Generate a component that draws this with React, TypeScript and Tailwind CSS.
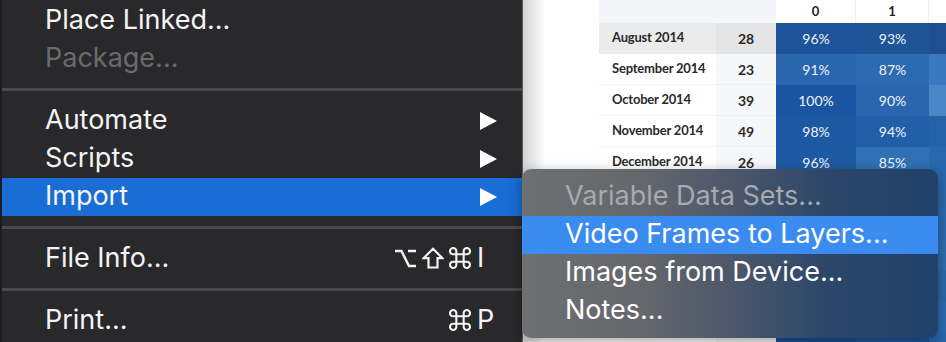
import React from "react";

const menuFont = { fontFamily: "Inter, 'Noto Sans', 'DejaVu Sans', sans-serif" };
const tableFont = { fontFamily: "Lato, 'Open Sans', sans-serif" };

function Arrow() {
  return (
    <svg width="17" height="18" viewBox="0 0 17 18" className="shrink-0">
      <polygon points="0,0 17,9 0,18" fill="#ffffff" />
    </svg>
  );
}

function OptIcon() {
  return (
    <svg width="23" height="20" viewBox="0 0 23 20" className="shrink-0">
      <path d="M1 3 H7.5 L15 18 H22 M14 3 H22" fill="none" stroke="#f4f4f4" strokeWidth="2.4" />
    </svg>
  );
}

function ShiftIcon() {
  return (
    <svg width="22" height="22" viewBox="0 0 22 22" className="shrink-0">
      <polygon
        points="11,1.8 20.5,11.2 15.5,11.2 15.5,20.5 6.5,20.5 6.5,11.2 1.5,11.2"
        fill="none"
        stroke="#f4f4f4"
        strokeWidth="2.2"
        strokeLinejoin="miter"
      />
    </svg>
  );
}

function CmdIcon() {
  return (
    <svg width="22" height="22" viewBox="2 2 18 18" className="shrink-0">
      <path
        d="M8 8 V5.5 A2.6 2.6 0 1 0 5.5 8 H16.5 A2.6 2.6 0 1 0 14 5.5 V16.5 A2.6 2.6 0 1 0 16.5 14 H5.5 A2.6 2.6 0 1 0 8 16.5 Z"
        fill="none"
        stroke="#f4f4f4"
        strokeWidth="1.7"
      />
    </svg>
  );
}

function Sep() {
  return (
    <div className="h-[24px] pt-[10px]">
      <div className="h-[3px] bg-[#4a4a4c]" />
    </div>
  );
}

type RowProps = {
  label: string;
  disabled?: boolean;
  highlight?: boolean;
  arrow?: boolean;
  mods?: string[];
  keyChar?: string;
};

function Mod({ m }: { m: string }) {
  if (m === "opt") return <OptIcon />;
  if (m === "shift") return <ShiftIcon />;
  return <CmdIcon />;
}

function Row({ label, disabled, highlight, arrow, mods, keyChar }: RowProps) {
  return (
    <div
      className={`h-[38px] flex items-center pl-[43px] pr-[25px] ${
        highlight ? "bg-[#1a6dd5]" : ""
      }`}
    >
      <span
        className={`flex-1 text-[27px] leading-none pb-[4px] whitespace-nowrap ${
          disabled ? "text-[#6b6b6d]" : "text-[#f4f4f4]"
        }`}
        style={menuFont}
      >
        {label}
      </span>
      {arrow && <Arrow />}
      {keyChar && (
        <div className="flex items-center pb-[3px]">
          <div className="flex items-center gap-[5px]">
            {mods?.map((m, i) => (
              <Mod key={i} m={m} />
            ))}
          </div>
          <span
            className="w-[20px] ml-[6px] text-[27px] leading-none text-[#f4f4f4] pb-[1px]"
            style={menuFont}
          >
            {keyChar}
          </span>
        </div>
      )}
    </div>
  );
}

const rows = [
  { name: "August 2014", n: "28", v: ["96%", "93%", "90%"], c: ["#1d5399", "#1e5498", "#1f4f8f"], hi: true },
  { name: "September 2014", n: "23", v: ["91%", "87%", "85%"], c: ["#2966ae", "#2c6bb2", "#3a78bf"] },
  { name: "October 2014", n: "39", v: ["100%", "90%", "82%"], c: ["#1b55a2", "#2966ad", "#4a86c8"] },
  { name: "November 2014", n: "49", v: ["98%", "94%", "92%"], c: ["#1d58a2", "#2160a8", "#2563a8"] },
  { name: "December 2014", n: "26", v: ["96%", "85%", "88%"], c: ["#1e5aa3", "#3070b5", "#2968ad"] },
  { name: "January 2015", n: "31", v: ["97%", "90%", "89%"], c: ["#1d58a1", "#2966ad", "#2a69ae"] },
  { name: "February 2015", n: "35", v: ["94%", "91%", "87%"], c: ["#2160a8", "#2864ab", "#2c6bb2"] },
  { name: "March 2015", n: "42", v: ["95%", "89%", "86%"], c: ["#1f5ca5", "#2a68ae", "#2e6db3"] },
  { name: "April 2015", n: "38", v: ["97%", "92%", "88%"], c: ["#1d58a1", "#2562a9", "#2968ad"] },
  { name: "May 2015", n: "44", v: ["96%", "90%", "87%"], c: ["#1e5aa3", "#2966ad", "#2c6bb2"] },
  { name: "June 2015", n: "29", v: ["100%", "95%", "90%"], c: ["#1a4f95", "#1d569e", "#2966ad"] },
];

function Table() {
  return (
    <div className="shrink-0 text-[13px]" style={tableFont}>
      <div className="flex h-[23px]">
        <div className="w-[177px] shrink-0 bg-[#f3f5f8]" />
        <div className="w-[80px] shrink-0 bg-white border-r border-[#eceef1] flex items-center justify-center font-bold text-[#222]">0</div>
        <div className="w-[73px] shrink-0 bg-white border-r border-[#eceef1] flex items-center justify-center font-bold text-[#222]">1</div>
        <div className="w-[73px] shrink-0 bg-white flex items-center justify-center font-bold text-[#222]">2</div>
      </div>
      {rows.map((r, i) => (
        <div key={i} className="flex h-[31px]">
          <div
            className={`w-[117px] shrink-0 pl-[13px] flex items-center font-bold text-[#2a2a2a] whitespace-nowrap border-b tracking-[-0.2px] ${
              r.hi ? "bg-[#ebebeb] border-[#ebebeb]" : "bg-white border-[#f1f2f4]"
            }`}
          >
            {r.name}
          </div>
          <div
            className={`w-[60px] shrink-0 flex items-center justify-center font-bold text-[14px] text-[#2a2a2a] border-b ${
              r.hi ? "bg-[#e4e4e4] border-[#e4e4e4]" : "bg-[#f6f7f9] border-[#eef0f2]"
            }`}
          >
            {r.n}
          </div>
          {r.v.map((v, j) => (
            <div
              key={j}
              className={`shrink-0 flex items-center justify-center text-[14px] text-[#eef3fa] ${
                j === 0 ? "w-[80px]" : "w-[73px]"
              }`}
              style={{ backgroundColor: r.c[j] }}
            >
              {v}
            </div>
          ))}
        </div>
      ))}
    </div>
  );
}

export default function App() {
  return (
    <div className="relative w-[946px] h-[342px] overflow-hidden bg-white flex">
      {/* Main menu */}
      <div className="w-[523px] h-full shrink-0 bg-[#29292b] border-l-2 border-[#1c1c1e] border-r border-r-[#5e5e60] pt-[2px] flex flex-col">
        <Row label="Place Linked..." />
        <Row label="Package..." disabled />
        <Sep />
        <Row label="Automate" arrow />
        <Row label="Scripts" arrow />
        <Row label="Import" arrow highlight />
        <Sep />
        <Row label="File Info..." mods={["opt", "shift", "cmd"]} keyChar="I" />
        <Sep />
        <Row label="Print..." mods={["cmd"]} keyChar="P" />
      </div>

      {/* Page with table */}
      <div className="relative flex-1 h-full overflow-hidden bg-white pl-[76px] flex">
        <div className="absolute left-0 top-0 h-full w-[22px] bg-gradient-to-r from-[#d2d2d2] to-white" />
        <Table />
      </div>

      {/* Submenu */}
      <div className="absolute left-[522px] top-[169px] w-[416px] h-[169px] rounded-[9px] pt-[9px] bg-[linear-gradient(to_right,#6f7072_0%,#64666b_30%,#4b566a_52%,#2c4769_72%,#21416b_100%)] shadow-[0_4px_14px_rgba(0,0,0,0.35)] overflow-hidden">
        {[
          { t: "Variable Data Sets...", d: true },
          { t: "Video Frames to Layers...", h: true },
          { t: "Images from Device..." },
          { t: "Notes..." },
        ].map((it, i) => (
          <div
            key={i}
            className={`h-[38px] flex items-center pl-[43px] ${it.h ? "bg-[#3b8cf1]" : ""}`}
          >
            <span
              className={`text-[27px] leading-none pb-[4px] whitespace-nowrap ${it.d ? "text-[#a7aaaf]" : "text-white"}`}
              style={menuFont}
            >
              {it.t}
            </span>
          </div>
        ))}
      </div>
    </div>
  );
}
